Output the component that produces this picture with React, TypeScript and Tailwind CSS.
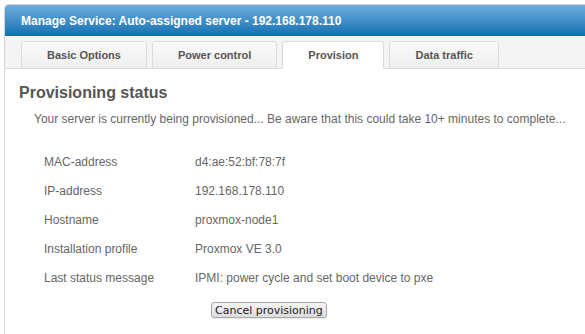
const TABS = ["Basic Options", "Power control", "Provision", "Data traffic"];
const ACTIVE_TAB = "Provision";

const ROWS = [
  { label: "MAC-address", value: "d4:ae:52:bf:78:7f" },
  { label: "IP-address", value: "192.168.178.110" },
  { label: "Hostname", value: "proxmox-node1" },
  { label: "Installation profile", value: "Proxmox VE 3.0" },
  { label: "Last status message", value: "IPMI: power cycle and set boot device to pxe" },
];

export default function App() {
  return (
    <div className="min-h-screen bg-white pt-[4px] pl-[4px] font-['Liberation_Sans',Arial,sans-serif]">
      <div className="min-h-[330px] border-l border-t border-[#d4d4d4] rounded-tl-[5px] overflow-hidden">
        {/* Header */}
        <div className="h-[31px] flex items-center pl-[16px] bg-gradient-to-b from-[#6aaedd] to-[#0b70b2] text-white text-[12px] font-bold">
          Manage Service: Auto-assigned server - 192.168.178.110
        </div>

        {/* Tabs */}
        <div className="h-[33px] flex items-end gap-[5px] pl-[16px] bg-[#f4f4f4] border-b border-[#dcdcdc]">
          {TABS.map((tab) => (
            <div
              key={tab}
              className={`h-[28px] -mb-px px-[25px] flex items-center rounded-t-[3px] border border-[#dcdcdc] text-[11px] font-bold text-[#555] ${tab === ACTIVE_TAB ? "bg-white border-b-white" : "bg-gradient-to-b from-[#fafafa] to-[#eeeeee]"}`}
            >
              {tab}
            </div>
          ))}
        </div>

        {/* Content */}
        <div className="pl-[14px] pt-[14px]">
          <h2 className="text-[16px] leading-[20px] font-bold text-[#555]">Provisioning status</h2>
          <p className="mt-[8px] pl-[15px] text-[12px] leading-[16px] text-[#666]">
            Your server is currently being provisioned... Be aware that this could take 10+ minutes to complete...
          </p>

          <div className="mt-[20px] pl-[25px] grid grid-cols-[151px_1fr] text-[12px] text-[#666]">
            {ROWS.map((row) => (
              <div key={row.label} className="contents">
                <div className="h-[29px] flex items-center">{row.label}</div>
                <div className="h-[29px] flex items-center">{row.value}</div>
              </div>
            ))}
          </div>

          <div className="mt-[10px] pl-[192px]">
            <button className="h-[16px] px-[3px] flex items-center rounded-[3px] border border-[#a8a8a8] bg-gradient-to-b from-[#f6f6f6] to-[#dcdcdc] text-[11px] leading-none text-[#222] font-['DejaVu_Sans',sans-serif] shadow-[0_1px_0_rgba(0,0,0,0.08)]">
              Cancel provisioning
            </button>
          </div>
        </div>
      </div>
    </div>
  );
}
